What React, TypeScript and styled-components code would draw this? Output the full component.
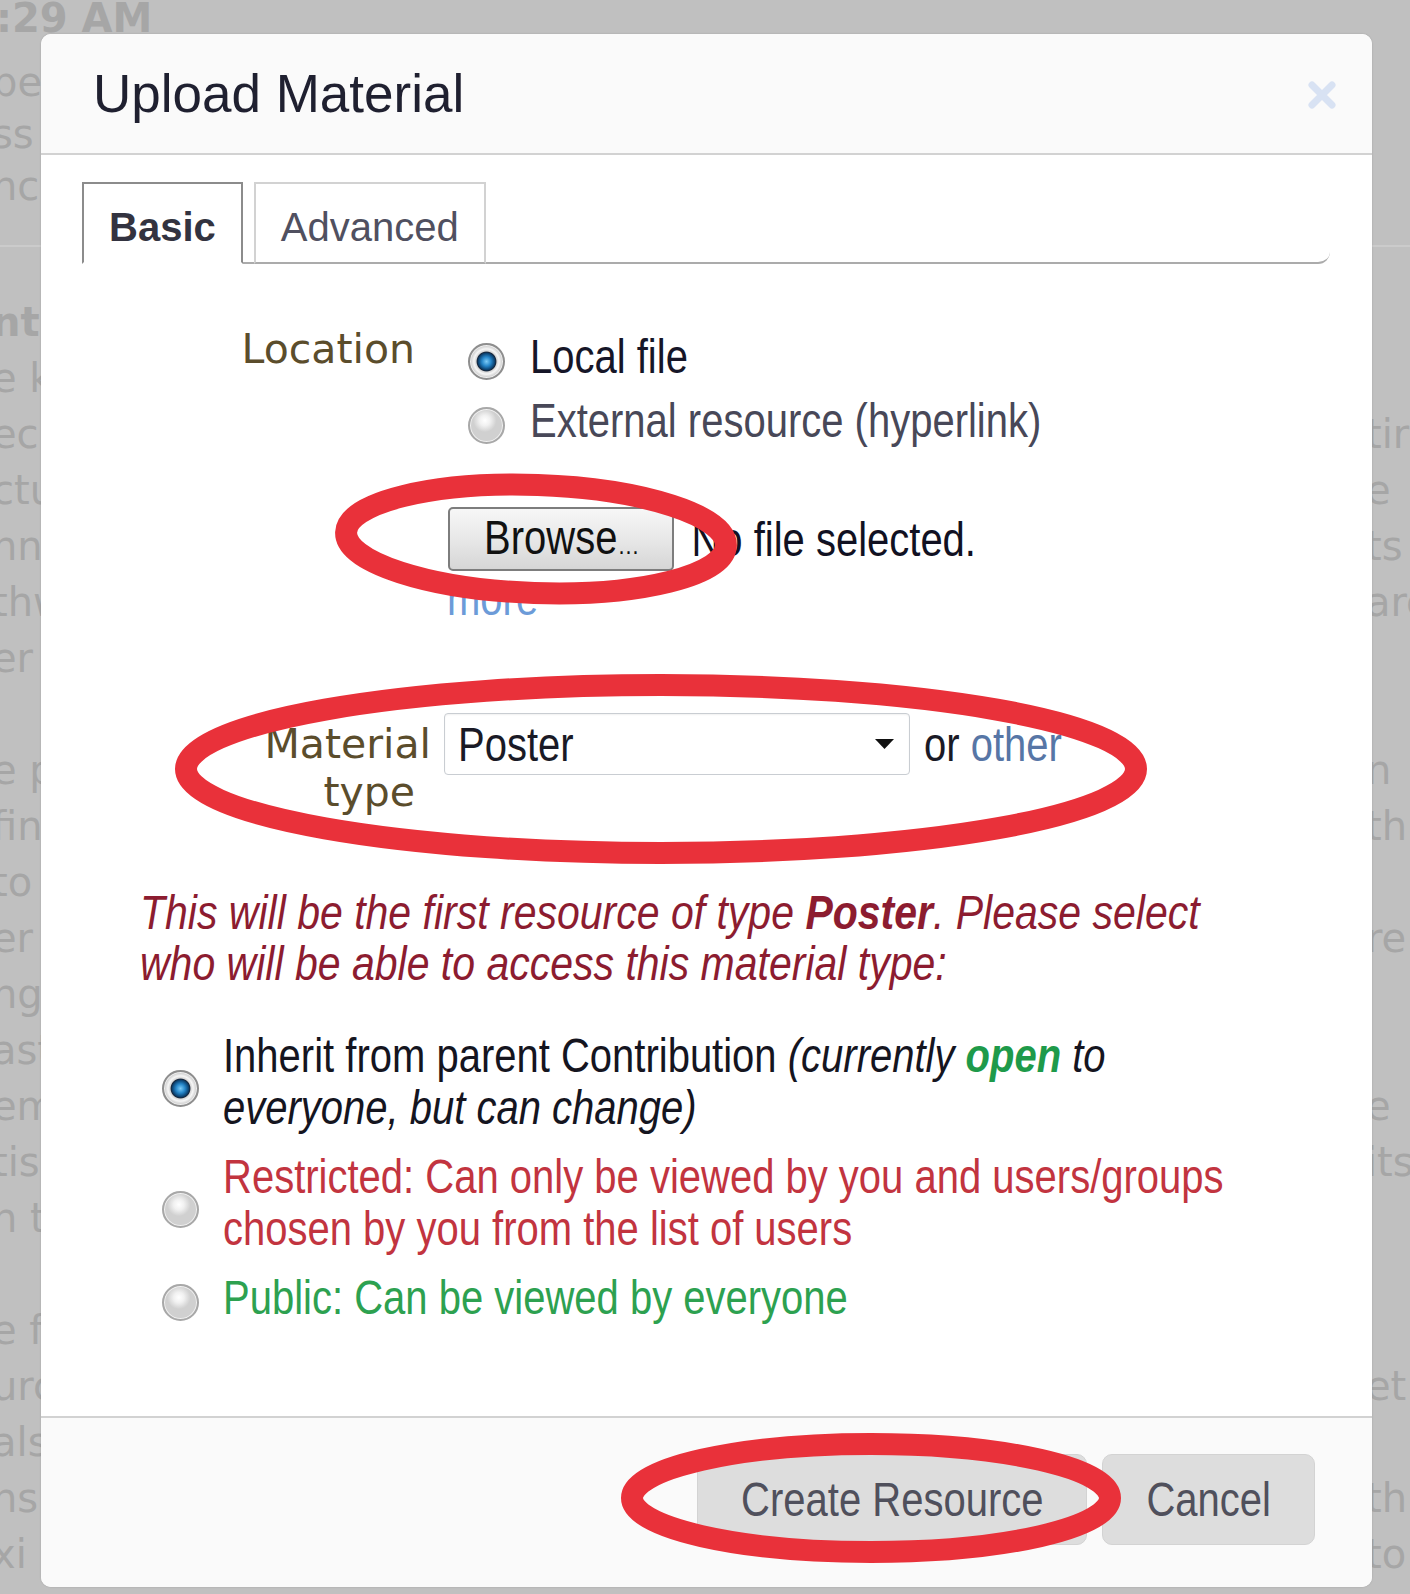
import React from "react";
import styled, { createGlobalStyle } from "styled-components";

const SANS = `"Liberation Sans", Arial, sans-serif`;
const VERDANA = `"DejaVu Sans", Verdana, sans-serif`;

const GlobalStyle = createGlobalStyle`
  html, body {
    margin: 0;
    padding: 0;
  }
  body {
    background: #c0c0c0;
    font-family: ${SANS};
  }
`;

const Screen = styled.div`
  position: relative;
  width: 1410px;
  height: 1594px;
  overflow: hidden;
  background: #c0c0c0;
`;

const Squeeze = styled.span<{ $k?: number }>`
  display: inline-block;
  white-space: nowrap;
  transform: scaleY(${(p) => p.$k ?? 1.2});
`;

/* page behind the modal */
const Backdrop = styled.div`
  display: flex;
  flex-direction: column;
  font-family: ${VERDANA};
  font-size: 40px;
  color: #a6a6a6;
`;

const Clock = styled.div`
  margin-top: -2px;
  line-height: 40px;
  font-weight: 700;
  text-indent: -4px;
  white-space: nowrap;
`;

const Columns = styled.div`
  display: flex;
  justify-content: space-between;
  margin-top: 18px;
`;

const Strip = styled.div<{ $width: number; $indent: number }>`
  width: ${(p) => p.$width}px;
  overflow: hidden;
  white-space: nowrap;
  text-indent: ${(p) => p.$indent}px;
`;

const BgSection = styled.div<{ $lh: number; $rule?: boolean }>`
  line-height: ${(p) => p.$lh}px;
  ${(p) =>
    p.$rule
      ? `margin-top: 33px; border-top: 2px solid #cbcbcb; padding-top: 47px;`
      : ``}
`;

const BgLine = styled.div<{ $bold?: boolean }>`
  font-weight: ${(p) => (p.$bold ? 700 : 400)};
`;

/* dialog */
const Dialog = styled.div`
  position: absolute;
  left: 41px;
  top: 34px;
  width: 1331px;
  height: 1553px;
  display: flex;
  flex-direction: column;
  background: #ffffff;
  border-radius: 10px;
  box-shadow: 0 0 2px rgba(0, 0, 0, 0.18);
  overflow: hidden;
`;

const Header = styled.header`
  display: flex;
  align-items: center;
  justify-content: space-between;
  height: 119px;
  padding: 0 35px 0 52px;
  background: #fafafa;
  border-bottom: 2px solid #d2d2d2;
`;

const Title = styled.h1`
  margin: 0;
  font-family: ${SANS};
  font-size: 53px;
  font-weight: 400;
  line-height: 60px;
  color: #1f2030;
`;

const CloseButton = styled.button`
  display: flex;
  padding: 0;
  border: 0;
  background: none;
  margin-top: 3px;
`;

const Body = styled.div`
  flex: 1;
  padding: 27px 42px 0 41px;
`;

const TabBar = styled.div`
  display: flex;
  align-items: flex-end;
  gap: 11px;
  height: 80px;
  border-bottom: 2px solid #ababab;
  border-bottom-right-radius: 12px;
`;

const Tab = styled.div<{ $active?: boolean }>`
  box-sizing: border-box;
  height: 82px;
  margin-bottom: -2px;
  padding: 19px 25px 0;
  border: 2px solid ${(p) => (p.$active ? "#8c8c8c" : "#d2d2d2")};
  border-bottom-color: ${(p) => (p.$active ? "#ffffff" : "#ababab")};
  background: #fff;
  font-family: ${SANS};
  font-size: 40px;
  line-height: 48px;
  font-weight: ${(p) => (p.$active ? 700 : 400)};
  color: ${(p) => (p.$active ? "#333340" : "#505060")};
`;

const FormRow = styled.div<{ $top: number }>`
  display: grid;
  grid-template-columns: 349px 1fr;
  align-items: start;
  column-gap: 13px;
  margin-top: ${(p) => p.$top}px;
`;

const Label = styled.div<{ $top: number }>`
  margin-top: ${(p) => p.$top}px;
  text-align: right;
  font-family: ${VERDANA};
  font-size: 41px;
  line-height: 48px;
  color: #5b4d2c;
`;

const LabelLine = styled.span<{ $inset: number }>`
  display: block;
  padding-right: ${(p) => p.$inset}px;
`;

const Field = styled.div`
  display: flex;
  flex-direction: column;
  align-items: flex-start;
`;

const Option = styled.label<{ $tone: string }>`
  display: flex;
  align-items: center;
  gap: 25px;
  padding-left: 24px;
  font-family: ${SANS};
  font-size: 40px;
  line-height: 64px;
  color: ${(p) => p.$tone};
`;

const Radio = styled.span<{ $checked?: boolean; $shift: number }>`
  flex: none;
  box-sizing: border-box;
  width: 37px;
  height: 37px;
  margin-top: ${(p) => p.$shift}px;
  border-radius: 50%;
  border: 2px solid ${(p) => (p.$checked ? "#8e8e8e" : "#a8a8a8")};
  background: ${(p) =>
    p.$checked
      ? "radial-gradient(circle closest-side at 50% 50%, #7ccbf7 0%, #2585c8 28%, #0c416f 50%, #17263a 57%, #d6d6d6 63%, #f7f7f7 76%, #c4c4c4 100%)"
      : "radial-gradient(circle closest-side at 45% 35%, #ffffff 0%, #f1f1f1 45%, #d0d0d0 100%)"};
  box-shadow: inset 0 0 0 1px rgba(255, 255, 255, 0.7);
`;

const FileRow = styled.div`
  display: flex;
  align-items: center;
  gap: 17px;
  margin: 55px 0 0 4px;
  font-family: ${SANS};
  font-size: 40px;
  line-height: 64px;
  color: #111122;
`;

const FileButton = styled.button`
  box-sizing: border-box;
  height: 64px;
  padding: 0 34px;
  border: 2px solid #7d7d7d;
  border-radius: 5px;
  background: linear-gradient(#f7f7f7, #e8e8e8 50%, #d6d6d6);
  font-family: ${SANS};
  font-size: 40px;
  line-height: 58px;
  color: #111;
`;

const Dots = styled.span`
  font-size: 22px;
  letter-spacing: -1px;
`;

const MoreLink = styled.a`
  margin: 3px 0 0 3px;
  font-family: ${SANS};
  font-size: 40px;
  line-height: 48px;
  color: #6c9bd8;
`;

const SelectRow = styled.div`
  display: flex;
  align-items: center;
  gap: 14px;
  font-family: ${SANS};
  font-size: 40px;
  color: #1a1a26;
`;

const Select = styled.div`
  box-sizing: border-box;
  display: flex;
  align-items: center;
  justify-content: space-between;
  width: 466px;
  height: 62px;
  padding: 0 15px 0 13px;
  border: 1px solid #c9cdd2;
  border-radius: 4px;
  box-shadow: inset 0 1px 2px rgba(0, 0, 0, 0.06);
  line-height: 58px;
`;

const OtherLink = styled.a`
  color: #5776a6;
`;

const Notice = styled.div`
  display: flex;
  flex-direction: column;
  align-items: flex-start;
  margin: 72px 0 0 58px;
  font-family: ${SANS};
  font-style: italic;
  font-size: 41px;
  line-height: 51px;
  color: #8c1c30;
`;

const RadioList = styled.div`
  display: flex;
  flex-direction: column;
  gap: 17px;
  margin: 39px 0 0 80px;
`;

const Choice = styled.label<{ $tone: string }>`
  display: flex;
  align-items: center;
  gap: 24px;
  font-family: ${SANS};
  font-size: 40px;
  line-height: 52px;
  color: ${(p) => p.$tone};
`;

const ChoiceText = styled.span`
  display: flex;
  flex-direction: column;
  align-items: flex-start;
`;

const Open = styled.b`
  color: #1e9a4a;
`;

const Footer = styled.footer`
  display: flex;
  justify-content: flex-end;
  gap: 15px;
  padding: 36px 57px 42px;
  background: #fafafa;
  border-top: 2px solid #d2d2d2;
`;

const FooterButton = styled.button`
  box-sizing: border-box;
  height: 91px;
  padding: 0 43px;
  border: 1px solid #d3d3d3;
  border-radius: 10px;
  background: #dddddd;
  font-family: ${SANS};
  font-size: 40px;
  color: #50505c;
`;

const Annotations = styled.svg`
  position: absolute;
  left: 0;
  top: 0;
  pointer-events: none;
`;

const NB = "\u00a0";
const leftTop = ["pe", "ss", "ncl"];
const leftMain = [
  "nt", "e k", "ecu", "ctu", "nnn", "thw", "er", NB, "e p", "fin", "to", "er",
  "ng", "ast", "em", "tis", "h t", NB, "e f", "urc", "als", "nsi", "xi",
];
const rightMain = [
  NB, NB, "tir", "e", "ts", "arc", NB, NB, "n", "th", NB, "re", NB, NB, "e",
  "its", NB, NB, NB, "et", NB, "th", "to",
];

const CloseIcon = () => (
  <svg width="30" height="30" viewBox="0 0 30 30">
    <path d="M5 5 L25 25 M25 5 L5 25" stroke="#d8e2f3" strokeWidth="7" strokeLinecap="round" />
  </svg>
);

const Caret = () => (
  <svg width="19" height="10" viewBox="0 0 19 10">
    <path d="M0 0 H19 L9.5 10 Z" fill="#111" />
  </svg>
);

const App = () => {
  return (
    <Screen>
      <GlobalStyle />
      <Backdrop>
        <Clock>:29 AM</Clock>
        <Columns>
          <Strip $width={41} $indent={-8}>
            <BgSection $lh={52}>
              {leftTop.map((t, i) => (
                <BgLine key={i}>{t}</BgLine>
              ))}
            </BgSection>
            <BgSection $lh={56} $rule>
              {leftMain.map((t, i) => (
                <BgLine key={i} $bold={i === 0}>{t}</BgLine>
              ))}
            </BgSection>
          </Strip>
          <Strip $width={38} $indent={-6}>
            <BgSection $lh={52}>
              {leftTop.map((_, i) => (
                <BgLine key={i}>{NB}</BgLine>
              ))}
            </BgSection>
            <BgSection $lh={56} $rule>
              {rightMain.map((t, i) => (
                <BgLine key={i}>{t}</BgLine>
              ))}
            </BgSection>
          </Strip>
        </Columns>
      </Backdrop>

      <Dialog>
        <Header>
          <Title>Upload Material</Title>
          <CloseButton>
            <CloseIcon />
          </CloseButton>
        </Header>

        <Body>
          <TabBar>
            <Tab $active>Basic</Tab>
            <Tab>Advanced</Tab>
          </TabBar>

          <FormRow $top={60}>
            <Label $top={1}>
              <LabelLine $inset={16}>Location</LabelLine>
            </Label>
            <Field>
              <Option $tone="#161628">
                <Radio $checked $shift={10} />
                <Squeeze>Local file</Squeeze>
              </Option>
              <Option $tone="#484858">
                <Radio $shift={10} />
                <Squeeze>External resource (hyperlink)</Squeeze>
              </Option>
              <FileRow>
                <FileButton>
                  <Squeeze>
                    Browse<Dots>…</Dots>
                  </Squeeze>
                </FileButton>
                <Squeeze>No file selected.</Squeeze>
              </FileRow>
              <MoreLink>
                <Squeeze>more</Squeeze>
              </MoreLink>
            </Field>
          </FormRow>

          <FormRow $top={91}>
            <Label $top={7}>
              <LabelLine $inset={0}>Material</LabelLine>
              <LabelLine $inset={16}>type</LabelLine>
            </Label>
            <SelectRow>
              <Select>
                <Squeeze>Poster</Squeeze>
                <Caret />
              </Select>
              <Squeeze>
                or <OtherLink>other</OtherLink>
              </Squeeze>
            </SelectRow>
          </FormRow>

          <Notice>
            <Squeeze $k={1.17}>
              This will be the first resource of type <b>Poster</b>. Please select
            </Squeeze>
            <Squeeze $k={1.17}>who will be able to access this material type:</Squeeze>
          </Notice>

          <RadioList>
            <Choice $tone="#15151f">
              <Radio $checked $shift={14} />
              <ChoiceText>
                <Squeeze>
                  Inherit from parent Contribution{" "}
                  <i>
                    (currently <Open>open</Open> to
                  </i>
                </Squeeze>
                <Squeeze>
                  <i>everyone, but can change)</i>
                </Squeeze>
              </ChoiceText>
            </Choice>
            <Choice $tone="#c2343f">
              <Radio $shift={14} />
              <ChoiceText>
                <Squeeze>Restricted: Can only be viewed by you and users/groups</Squeeze>
                <Squeeze>chosen by you from the list of users</Squeeze>
              </ChoiceText>
            </Choice>
            <Choice $tone="#2da150">
              <Radio $shift={10} />
              <ChoiceText>
                <Squeeze>Public: Can be viewed by everyone</Squeeze>
              </ChoiceText>
            </Choice>
          </RadioList>
        </Body>

        <Footer>
          <FooterButton>
            <Squeeze>Create Resource</Squeeze>
          </FooterButton>
          <FooterButton>
            <Squeeze>Cancel</Squeeze>
          </FooterButton>
        </Footer>
      </Dialog>

      <Annotations width="1410" height="1594" viewBox="0 0 1410 1594">
        <g fill="none" stroke="#e9313a" strokeWidth="22">
          <ellipse cx="536" cy="539" rx="190" ry="54" transform="rotate(2 536 539)" />
          <ellipse cx="661" cy="769" rx="475" ry="84" />
          <ellipse cx="871" cy="1498" rx="239" ry="54" />
        </g>
      </Annotations>
    </Screen>
  );
};

export default App;
